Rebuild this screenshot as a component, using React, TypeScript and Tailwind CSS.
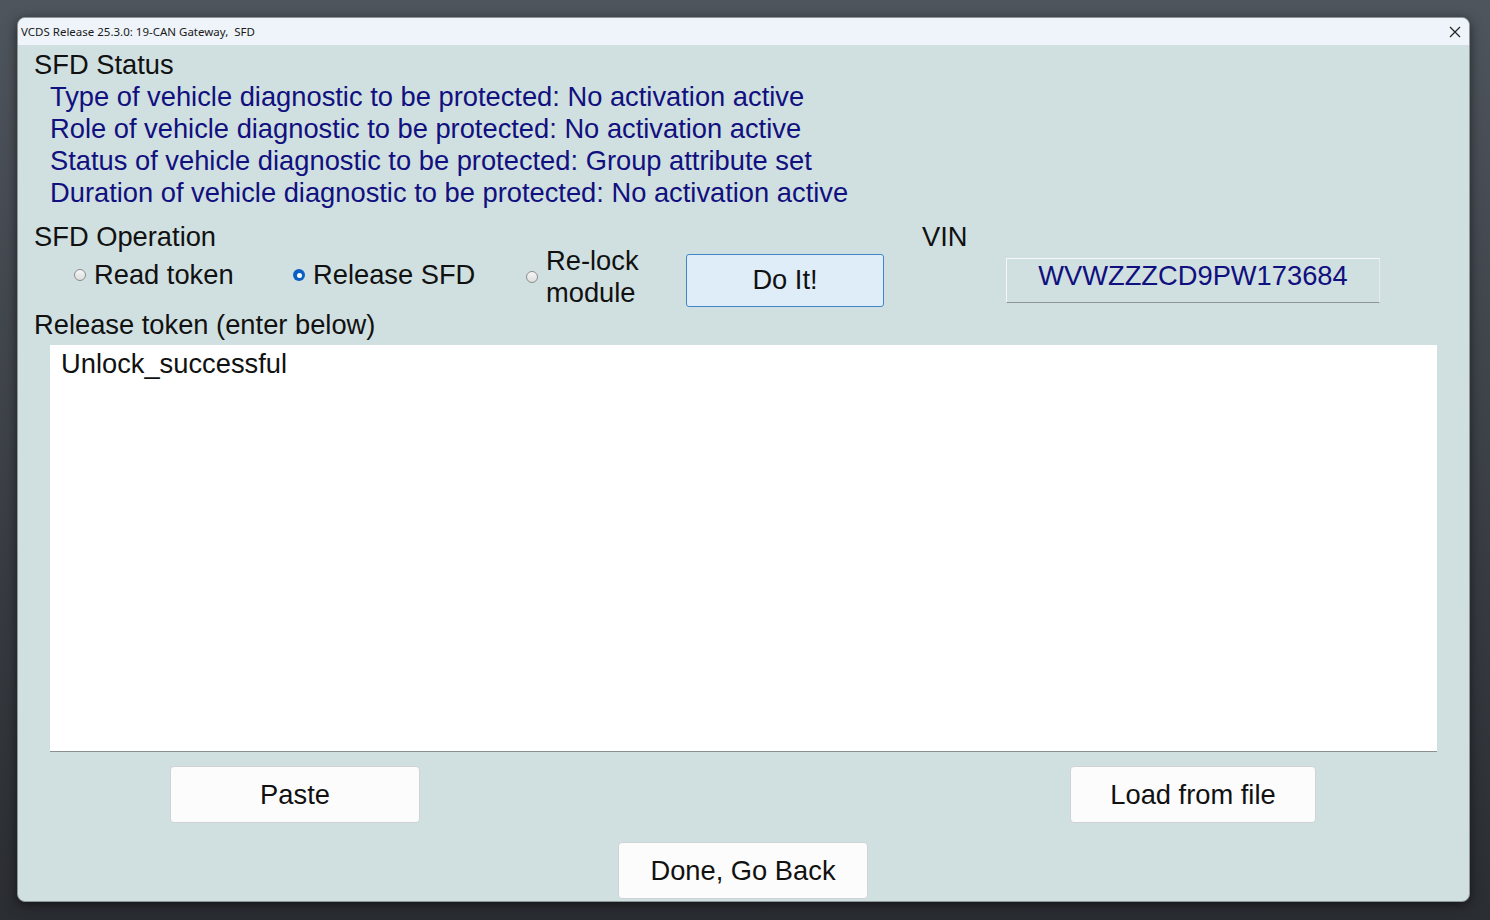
import React from "react";

const font = { fontFamily: '"Liberation Sans", Arial, sans-serif' };

const Radio: React.FC<{ checked?: boolean }> = ({ checked }) =>
  checked ? (
    <span className="flex h-[12px] w-[12px] shrink-0 items-center justify-center rounded-full bg-[#0b5fc4]">
      <span className="h-[5px] w-[5px] rounded-full bg-white" />
    </span>
  ) : (
    <span className="h-[12px] w-[12px] shrink-0 rounded-full border border-[#8c8c8c] bg-gradient-to-b from-[#f6f6f6] to-[#dedede]" />
  );

const FormButton: React.FC<{ label: string; className?: string }> = ({ label, className }) => (
  <button
    className={
      "flex h-[57px] items-center justify-center rounded-[4px] border border-[#cfd3d5] bg-[#fcfcfc] pt-[1px] text-[27.3px] text-[#111] " +
      (className ?? "")
    }
  >
    {label}
  </button>
);

export default function App() {
  const statusLines = [
    "Type of vehicle diagnostic to be protected: No activation active",
    "Role of vehicle diagnostic to be protected: No activation active",
    "Status of vehicle diagnostic to be protected: Group attribute set",
    "Duration of vehicle diagnostic to be protected: No activation active",
  ];

  return (
    <div className="h-[920px] w-full overflow-hidden bg-gradient-to-b from-[#4f555d] to-[#2a2d32] pl-[17px] pt-[17px]">
      <div
        className="flex h-[885px] w-[1453px] flex-col overflow-hidden rounded-[8px] border border-[#8d9699] bg-[#d0dfe0] shadow-[0_3px_12px_rgba(0,0,0,0.55)]"
        style={font}
      >
        {/* title bar */}
        <div className="flex h-[27px] shrink-0 items-center justify-between bg-[#eef4f9] pl-[3px] pr-[8px]">
          <span
            className="whitespace-pre text-[11.5px] text-[#1a1a1a]"
            style={{ fontFamily: '"Noto Sans", "Open Sans", sans-serif' }}
          >
            VCDS Release 25.3.0: 19-CAN Gateway,  SFD
          </span>
          <svg width="12" height="12" viewBox="0 0 12 12" className="mt-[1px]">
            <path d="M1 1 L11 11 M11 1 L1 11" stroke="#222" strokeWidth="1.2" fill="none" />
          </svg>
        </div>

        {/* body */}
        <div className="flex flex-col pl-[16px] text-[27.3px] text-[#111]">
          <div className="mt-[4px] leading-[32px]">SFD Status</div>
          <div className="pl-[16px] text-[#10107e]">
            {statusLines.map((l) => (
              <div key={l} className="leading-[32px]">
                {l}
              </div>
            ))}
          </div>

          <div className="mt-[12px] flex">
            {/* operation */}
            <div className="flex w-[888px] flex-col">
              <div className="mt-[2px] leading-[28px]">SFD Operation</div>
              <div className="flex h-[58px] items-start">
                <label className="ml-[40px] mt-[8px] flex h-[32px] w-[219px] items-center gap-[8px] leading-[32px]">
                  <Radio />
                  Read token
                </label>
                <label className="mt-[8px] flex h-[32px] w-[233px] items-center gap-[8px] leading-[32px]">
                  <Radio checked />
                  Release SFD
                </label>
                <label className="-mt-[6px] flex w-[160px] items-center gap-[8px]">
                  <span className="-mt-[1px] flex shrink-0">
                    <Radio />
                  </span>
                  <span className="leading-[32px]">
                    Re-lock
                    <br />
                    module
                  </span>
                </label>
                <button className="mt-[3px] flex h-[53px] w-[198px] items-center justify-center rounded-[3px] border border-[#3f87c7] bg-[#dfedf9] text-[27.3px]">
                  Do It!
                </button>
              </div>
            </div>

            {/* VIN */}
            <div className="flex flex-col">
              <div className="mt-[2px] leading-[28px]">VIN</div>
              <div className="ml-[84px] mt-[7px] flex h-[45px] w-[374px] items-start justify-center border-b border-l border-r border-t border-b-[#8e9597] border-l-[#f4f8f8] border-r-[#e4ecec] border-t-[#f4f8f8] pt-[1px] leading-[32px] text-[#10107e]">
                WVWZZZCD9PW173684
              </div>
            </div>
          </div>

          <div className="leading-[32px]">Release token (enter below)</div>
          <div className="ml-[16px] mt-[4px] h-[407px] w-[1387px] border-b border-[#8a8f91] bg-white pl-[11px] pt-[3px] leading-[32px]">
            Unlock_successful
          </div>

          <div className="mt-[14px] flex">
            <FormButton label="Paste" className="ml-[136px] w-[250px]" />
            <FormButton label="Load from file" className="ml-[650px] w-[246px]" />
          </div>
          <div className="mt-[19px] flex">
            <FormButton label="Done, Go Back" className="ml-[584px] w-[250px]" />
          </div>
        </div>
      </div>
    </div>
  );
}
